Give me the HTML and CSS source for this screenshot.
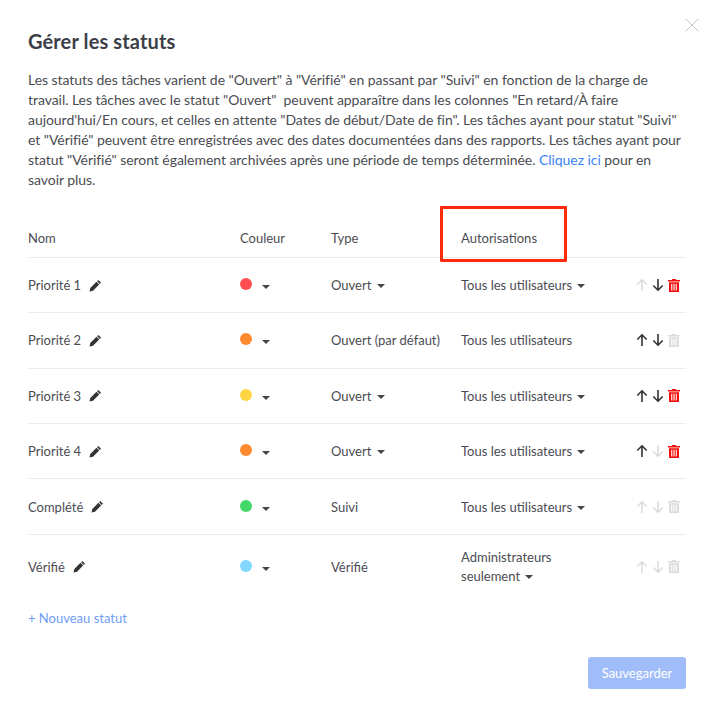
FILE: index.html
```html
<!DOCTYPE html>
<html lang="fr">
<head>
<meta charset="utf-8">
<title>Gérer les statuts</title>
<link rel="stylesheet" href="styles.css">
</head>
<body>
<svg class="defs" width="0" height="0" aria-hidden="true">
  <defs>
    <symbol id="pencil" viewBox="0 0 12 12"><path d="M8.6.9l2.5 2.5-1.1 1.1-2.5-2.5zM6.9 2.6l2.5 2.5-5.7 5.7-3.2.7.7-3.2z" fill="currentColor"/></symbol>
    <symbol id="up" viewBox="0 0 12 14"><path d="M6 13V1.8M1.3 6.5L6 1.8l4.7 4.7" fill="none" stroke="currentColor" stroke-width="1.6"/></symbol>
    <symbol id="down" viewBox="0 0 12 14"><path d="M6 1v11.2M1.3 7.5L6 12.2l4.7-4.7" fill="none" stroke="currentColor" stroke-width="1.6"/></symbol>
    <symbol id="trash" viewBox="0 0 12 13"><path fill-rule="evenodd" d="M4.2 0h3.6l.5 1H12v1.4H0V1h3.7zM1 3.2h10V13H1zM3.2 4.8v6.6h1.1V4.8zm2.25 0v6.6h1.1V4.8zm2.25 0v6.6h1.1V4.8z" fill="currentColor"/></symbol>
  </defs>
</svg>
<main class="modal">
  <button class="close" aria-label="Fermer"><svg width="14" height="14" viewBox="0 0 14 14"><path d="M.5.5l13 13M13.5.5l-13 13" fill="none" stroke="currentColor"/></svg></button>
  <h1 class="title">Gérer les statuts</h1>
  <p class="intro">Les statuts des tâches varient de "Ouvert" à "Vérifié" en passant par "Suivi" en fonction de la charge de travail. Les tâches avec le statut "Ouvert"&nbsp; peuvent apparaître dans les colonnes "En retard/À faire aujourd'hui/En cours, et celles en attente "Dates de début/Date de fin". Les tâches ayant pour statut "Suivi" et "Vérifié" peuvent être enregistrées avec des dates documentées dans des rapports. Les tâches ayant pour statut "Vérifié" seront également archivées après une période de temps déterminée. <a class="link" href="#">Cliquez ici</a> pour en savoir plus.</p>

  <section class="table">
    <div class="row head">
      <div>Nom</div><div>Couleur</div><div>Type</div>
      <div class="auth-head">Autorisations<span class="highlight"></span></div>
      <div></div>
    </div>

    <div class="row">
      <div class="name">Priorité 1 <svg class="pencil"><use href="#pencil"/></svg></div>
      <div class="color"><span class="dot red"></span><span class="caret"></span></div>
      <div>Ouvert <span class="caret"></span></div>
      <div>Tous les utilisateurs <span class="caret"></span></div>
      <div class="actions"><svg class="arrow off"><use href="#up"/></svg><svg class="arrow"><use href="#down"/></svg><svg class="trash danger"><use href="#trash"/></svg></div>
    </div>
    <div class="row">
      <div class="name">Priorité 2 <svg class="pencil"><use href="#pencil"/></svg></div>
      <div class="color"><span class="dot orange"></span><span class="caret"></span></div>
      <div>Ouvert (par défaut)</div>
      <div>Tous les utilisateurs</div>
      <div class="actions"><svg class="arrow"><use href="#up"/></svg><svg class="arrow"><use href="#down"/></svg><svg class="trash off"><use href="#trash"/></svg></div>
    </div>
    <div class="row">
      <div class="name">Priorité 3 <svg class="pencil"><use href="#pencil"/></svg></div>
      <div class="color"><span class="dot yellow"></span><span class="caret"></span></div>
      <div>Ouvert <span class="caret"></span></div>
      <div>Tous les utilisateurs <span class="caret"></span></div>
      <div class="actions"><svg class="arrow"><use href="#up"/></svg><svg class="arrow"><use href="#down"/></svg><svg class="trash danger"><use href="#trash"/></svg></div>
    </div>
    <div class="row">
      <div class="name">Priorité 4 <svg class="pencil"><use href="#pencil"/></svg></div>
      <div class="color"><span class="dot orange"></span><span class="caret"></span></div>
      <div>Ouvert <span class="caret"></span></div>
      <div>Tous les utilisateurs <span class="caret"></span></div>
      <div class="actions"><svg class="arrow"><use href="#up"/></svg><svg class="arrow off"><use href="#down"/></svg><svg class="trash danger"><use href="#trash"/></svg></div>
    </div>
    <div class="row">
      <div class="name">Complété <svg class="pencil"><use href="#pencil"/></svg></div>
      <div class="color"><span class="dot green"></span><span class="caret"></span></div>
      <div>Suivi</div>
      <div>Tous les utilisateurs <span class="caret"></span></div>
      <div class="actions"><svg class="arrow off"><use href="#up"/></svg><svg class="arrow off"><use href="#down"/></svg><svg class="trash off"><use href="#trash"/></svg></div>
    </div>
    <div class="row last">
      <div class="name">Vérifié <svg class="pencil"><use href="#pencil"/></svg></div>
      <div class="color"><span class="dot blue"></span><span class="caret"></span></div>
      <div>Vérifié</div>
      <div class="wrap">Administrateurs seulement <span class="caret"></span></div>
      <div class="actions"><svg class="arrow off"><use href="#up"/></svg><svg class="arrow off"><use href="#down"/></svg><svg class="trash off"><use href="#trash"/></svg></div>
    </div>
  </section>

  <a class="new" href="#">+ Nouveau statut</a>
  <div class="footer"><button class="save">Sauvegarder</button></div>
</main>
</body>
</html>
```
FILE: styles.css
```css
* { box-sizing: border-box; }
html, body { margin: 0; padding: 0; background: #fff; }
body { font-family: Lato, "Open Sans", sans-serif; color: #4a4c52; font-size: 13px; }
.defs { position: absolute; }
.modal { position: relative; width: 715px; height: 715px; padding: 29px 29px 0 28px; }
.close { position: absolute; top: 18px; right: 16px; padding: 0; border: 0; background: none; color: #c4c6ca; line-height: 0; }
.title { margin: 0; font-size: 20px; line-height: 24px; font-weight: 700; letter-spacing: .12px; color: #3c3f47; }
.intro { margin: 17px 0 0; font-size: 14px; letter-spacing: -.05px; line-height: 20px; color: #4a4c52; }
.link { color: #3b82f6; text-decoration: none; }
.table { margin-top: 21px; }
.row { display: grid; grid-template-columns: 212px 91px 130px 1fr auto; align-items: center; height: 55.4px; border-bottom: 1px solid #ececec; }
.row.head { height: 46.9px; padding: 14px 0 6px; }
.row.last { border-bottom: 0; height: 64px; }
.auth-head { position: relative; }
.highlight { position: absolute; left: -21px; top: -24px; width: 127px; height: 56px; border: 3px solid #ff2a0a; border-radius: 1px; }
.name { display: flex; align-items: center; gap: 8px; }
.pencil { width: 13px; height: 13px; color: #333; }
.color { display: flex; align-items: center; gap: 10px; }
.dot { width: 12px; height: 12px; margin-top: -2px; border-radius: 50%; }
.red { background: #ff4d52; }
.orange { background: #ff8b30; }
.yellow { background: #ffd445; }
.green { background: #42d968; }
.blue { background: #80d8ff; }
.caret { display: inline-block; width: 0; height: 0; margin-left: 2px; vertical-align: 2px; border: 4px solid transparent; border-bottom: 0; border-top-color: #43454b; }
.color .caret { margin: 4px 0 0; }
.wrap { width: 110px; line-height: 19px; }
.actions { display: flex; align-items: center; gap: 4px; padding-right: 6px; width: 53px; justify-content: flex-end; color: #333; }
.arrow { width: 12px; height: 14px; }
.trash { width: 12px; height: 13px; }
.off { color: #dcdcdc; }
.danger { color: #f50d0d; }
.new { display: inline-block; margin-top: 9.6px; color: #6f9cf6; text-decoration: none; line-height: 20px; }
.footer { display: flex; justify-content: flex-end; margin-top: 29px; }
.save { width: 98px; height: 32px; border: 0; border-radius: 3px; background: #a0bdfa; color: #fff; font: inherit; }
```
